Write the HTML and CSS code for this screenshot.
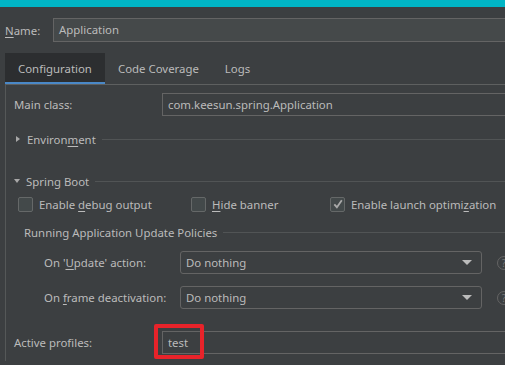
FILE: index.html
```html
<!DOCTYPE html>
<html lang="en">
<head>
  <meta charset="UTF-8">
  <title>Run Configuration</title>
  <link rel="stylesheet" href="styles.css">
</head>
<body>
  <div class="topbar"></div>

  <div class="name-row">
    <label class="name-label"><u>N</u>ame:</label>
    <div class="name-field">Application</div>
  </div>

  <div class="tabs">
    <div class="tab tab-active">Configuration</div>
    <div class="tab">Code Coverage</div>
    <div class="tab">Logs</div>
  </div>

  <div class="panel">
    <div class="row row-main">
      <span class="label">Main class:</span>
      <div class="field">com.keesun.spring.Application</div>
    </div>

    <div class="section section-env">
      <span class="arrow-right"></span>
      <span class="section-title">Environ<u>m</u>ent</span>
      <span class="section-line"></span>
    </div>

    <div class="section section-boot">
      <span class="arrow-down"></span>
      <span class="section-title">Spring Boot</span>
      <span class="section-line"></span>
    </div>

    <div class="checks">
      <div class="check check-debug">
        <span class="box"></span>
        <span>Enable <u>d</u>ebug output</span>
      </div>
      <div class="check check-banner">
        <span class="box"></span>
        <span><u>H</u>ide banner</span>
      </div>
      <div class="check check-launch">
        <span class="box">
          <svg width="12" height="12" viewBox="0 0 12 12"><path d="M2.3 6.3 L4.9 9.2 L9.8 2.2" fill="none" stroke="#a9a9a9" stroke-width="1.8"/></svg>
        </span>
        <span>Enable launch optimi<u>z</u>ation</span>
      </div>
    </div>

    <div class="section section-policy">
      <span class="section-title">Running Application Update Policies</span>
      <span class="section-line"></span>
    </div>

    <div class="policy policy-update">
      <span class="policy-label">On '<u>U</u>pdate' action:</span>
      <div class="select">Do nothing<span class="select-arrow"></span></div>
      <span class="help">?</span>
    </div>

    <div class="policy policy-frame">
      <span class="policy-label">On <u>f</u>rame deactivation:</span>
      <div class="select">Do nothing<span class="select-arrow"></span></div>
      <span class="help">?</span>
    </div>

    <div class="row row-profiles">
      <span class="label">Active profiles:</span>
      <div class="field field-marked">test</div>
    </div>
  </div>
</body>
</html>
```

FILE: styles.css
```css
body {
  margin: 0;
  width: 505px;
  height: 365px;
  overflow: hidden;
  background-color: #3c3f41;
  color: #bbbbbb;
  font-family: 'Noto Sans', sans-serif;
  font-size: 11.4px;
  white-space: nowrap;
}

u {
  text-underline-offset: 2px;
}

.topbar {
  height: 7px;
  background-color: #00b5c5;
}

.name-row {
  display: flex;
  align-items: center;
  margin-top: 11px;
  padding-left: 5px;
}

.name-label {
  width: 48px;
}

.name-field {
  flex: 1;
  height: 22px;
  line-height: 22px;
  margin-right: -20px;
  padding-left: 5px;
  border: 1px solid #646464;
  background-color: #45494a;
}

.tabs {
  display: flex;
  margin: 11px 0 0 5px;
  height: 31px;
}

.tab {
  padding: 0 13px;
  line-height: 32px;
}

.tab-active {
  width: 74px;
  background-color: #2c2e30;
  border-bottom: 2px solid #4a88c7;
  height: 29px;
}

.panel {
  margin-left: 5px;
  border-left: 1px solid #555858;
  border-top: 1px solid #5e6060;
  padding-left: 8px;
  height: 276px;
}

.row {
  display: flex;
  align-items: center;
}

.label {
  width: 148px;
}

.field {
  flex: 1;
  height: 21px;
  line-height: 21px;
  padding-left: 5px;
  margin-right: -20px;
  border: 1px solid #646464;
  position: relative;
}

.row-main {
  margin-top: 8px;
}

.section {
  display: flex;
  align-items: center;
  height: 18px;
}

.section-title {
  padding: 0 6px 0 0;
}

.section-line {
  flex: 1;
  border-top: 1px solid #515455;
}

.section-env {
  margin-top: 14px;
}

.section-boot {
  margin-top: 24px;
}

.arrow-right {
  width: 0;
  height: 0;
  margin: 0 7px 0 2px;
  border-top: 3px solid transparent;
  border-bottom: 3px solid transparent;
  border-left: 4px solid #a8a8a8;
}

.arrow-down {
  width: 0;
  height: 0;
  margin: 0 6px 0 0;
  border-left: 3.5px solid transparent;
  border-right: 3.5px solid transparent;
  border-top: 4px solid #a8a8a8;
}

.checks {
  display: flex;
  align-items: center;
  height: 18px;
  margin-top: 5px;
  padding-left: 4px;
}

.check {
  flex: none;
  display: flex;
  align-items: center;
}

.check-debug {
  width: 173px;
}

.check-banner {
  width: 139px;
}

.box {
  flex: none;
  width: 13px;
  height: 13px;
  margin-right: 6px;
  border: 1px solid #656868;
  border-radius: 2px;
  background-color: #43494a;
  display: flex;
  align-items: center;
  justify-content: center;
}

.section-policy {
  margin-top: 10px;
  padding-left: 10px;
}

.policy {
  display: flex;
  align-items: center;
  padding-left: 30px;
}

.policy-label {
  flex: none;
  width: 136px;
}

.policy-update {
  margin-top: 10px;
}

.policy-frame {
  margin-top: 12px;
}

.select {
  flex: none;
  position: relative;
  width: 295px;
  height: 21px;
  line-height: 21px;
  padding-left: 5px;
  border: 1px solid #646464;
  border-radius: 3px;
}

.select-arrow {
  position: absolute;
  right: 9px;
  top: 8px;
  width: 0;
  height: 0;
  border-left: 5px solid transparent;
  border-right: 5px solid transparent;
  border-top: 5px solid #bbbbbb;
}

.help {
  flex: none;
  width: 12px;
  height: 12px;
  margin-left: 15px;
  border: 1px solid #646464;
  border-radius: 50%;
  font-size: 10px;
  line-height: 12px;
  text-align: center;
  color: #777777;
}

.row-profiles {
  margin-top: 22px;
}

.field-marked::before {
  content: '';
  position: absolute;
  left: -9px;
  top: -8px;
  width: 42px;
  height: 27px;
  border: 4px solid #e8232a;
  border-radius: 2px;
}
```
